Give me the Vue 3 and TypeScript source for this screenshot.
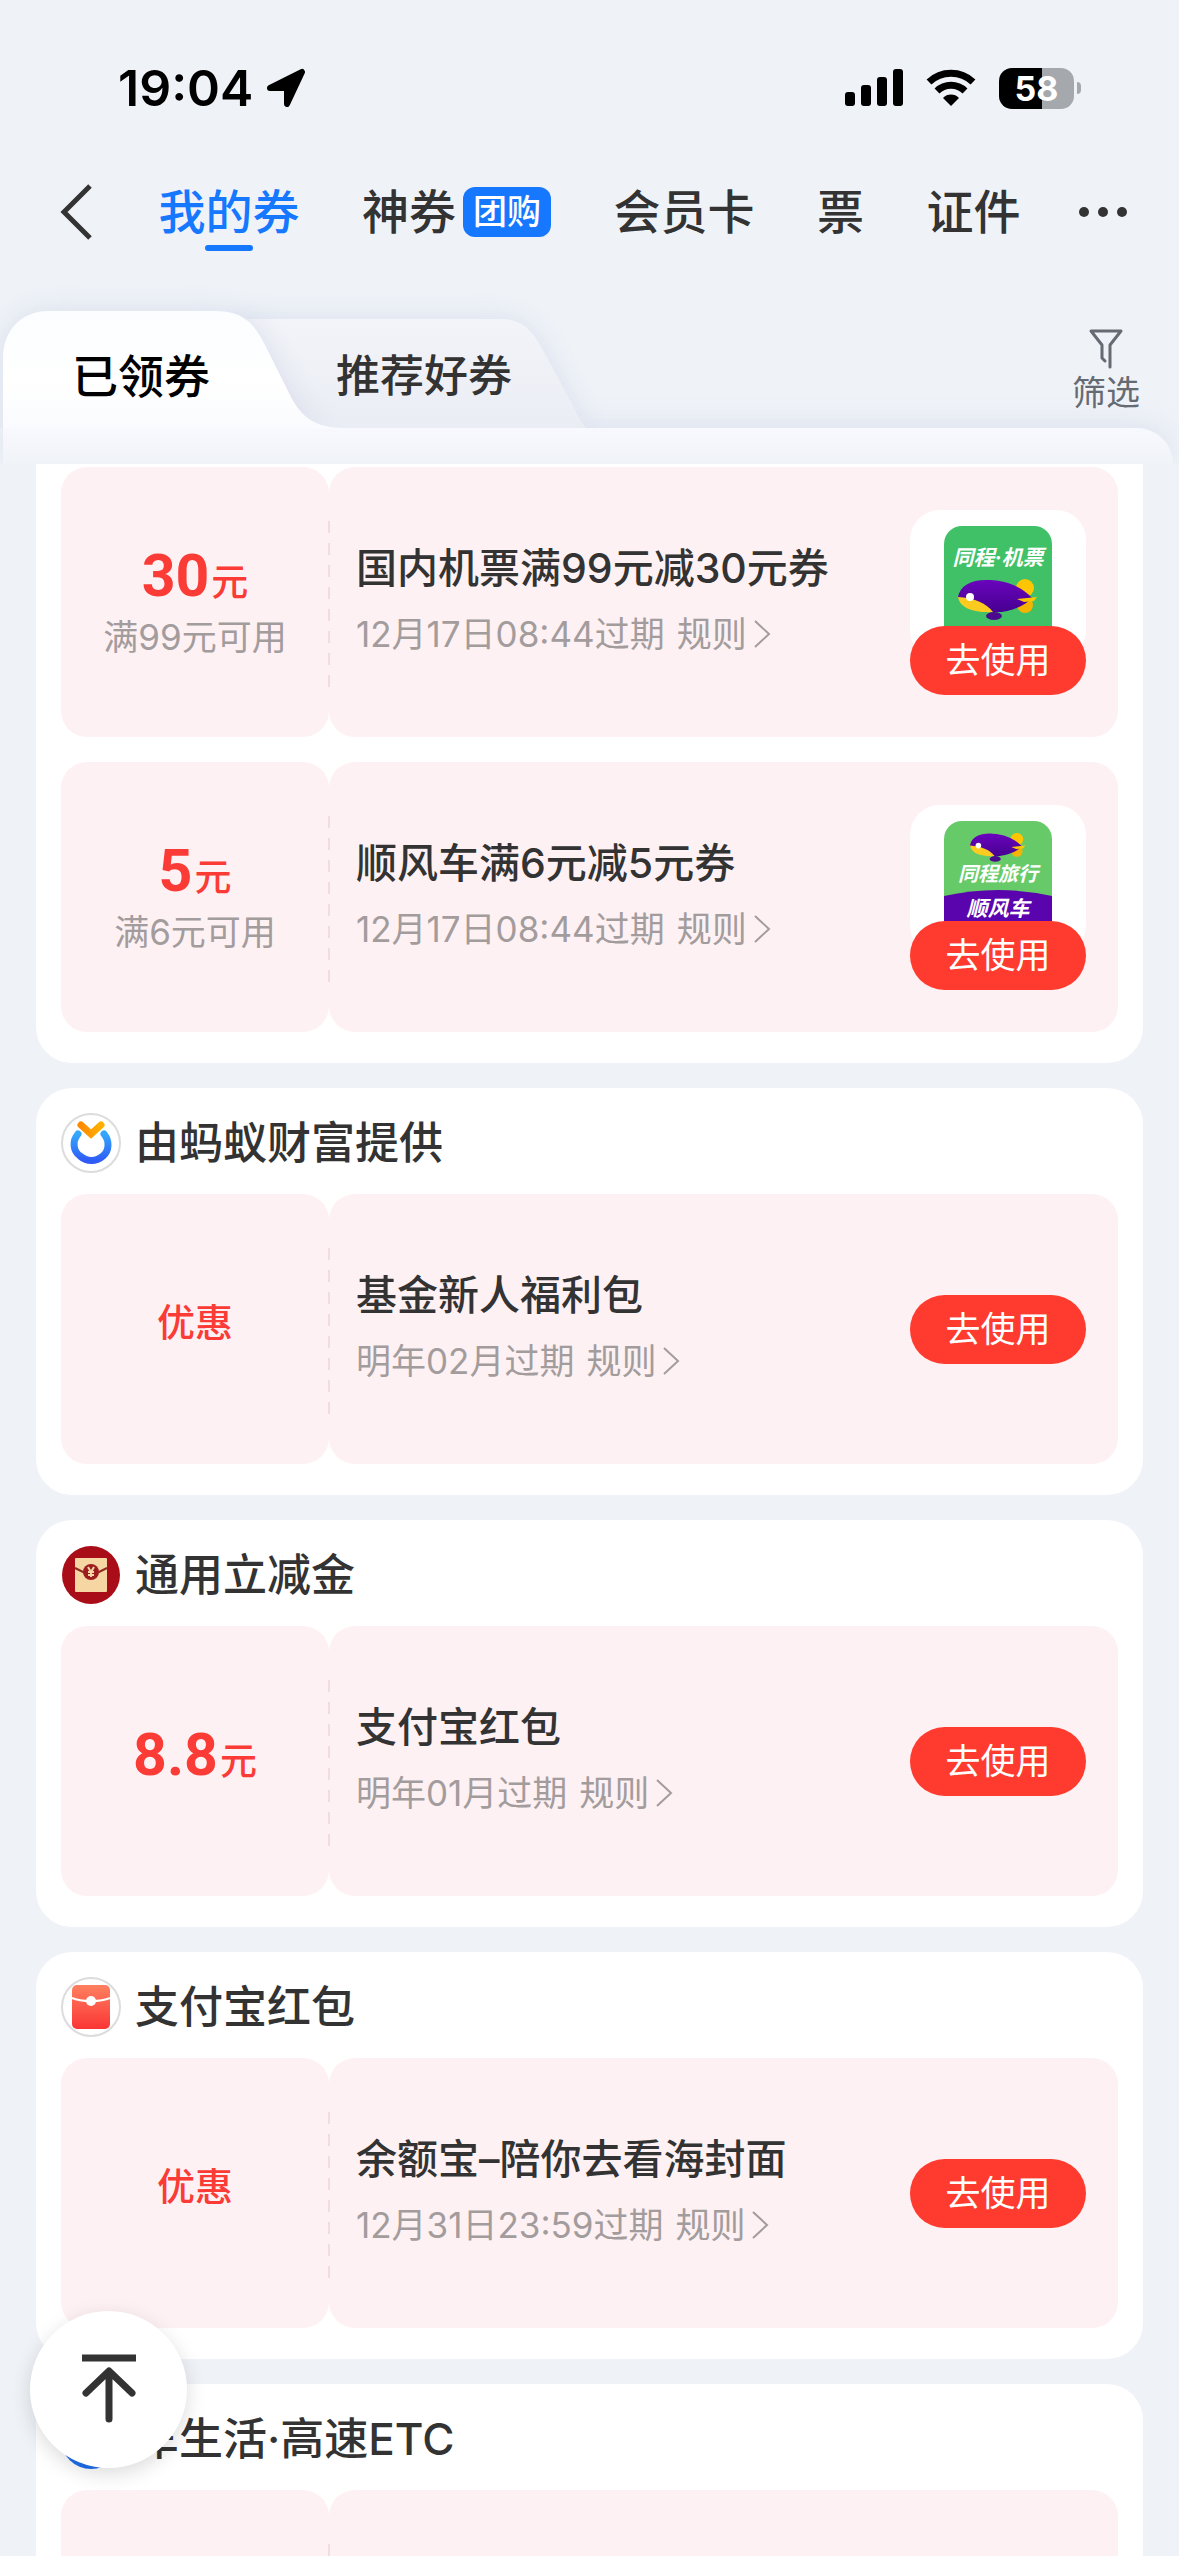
<script setup lang="ts">
import { ref } from 'vue'

type Thumb = 'flight' | 'ride'
type Icon = 'fortune' | 'discount' | 'redpacket' | 'car'

interface Coupon {
  id: number
  amount?: string
  label?: string
  condition?: string
  title: string
  expiry: string
  thumb?: Thumb
}

interface Group {
  id: number
  icon?: Icon
  name?: string
  coupons: Coupon[]
}

const navItems = [
  { id: 'mine', text: '我的券' },
  { id: 'deal', text: '神券', badge: '团购' },
  { id: 'member', text: '会员卡' },
  { id: 'ticket', text: '票' },
  { id: 'id', text: '证件' },
]
const activeNav = ref('mine')
const activeTab = ref<'owned' | 'recommended'>('owned')
const list = ref<HTMLElement | null>(null)

const groups: Group[] = [
  {
    id: 1,
    coupons: [
      { id: 11, amount: '30', condition: '满99元可用', title: '国内机票满99元减30元券', expiry: '12月17日08:44过期', thumb: 'flight' },
      { id: 12, amount: '5', condition: '满6元可用', title: '顺风车满6元减5元券', expiry: '12月17日08:44过期', thumb: 'ride' },
    ],
  },
  { id: 2, icon: 'fortune', name: '由蚂蚁财富提供', coupons: [{ id: 21, label: '优惠', title: '基金新人福利包', expiry: '明年02月过期' }] },
  { id: 3, icon: 'discount', name: '通用立减金', coupons: [{ id: 31, amount: '8.8', title: '支付宝红包', expiry: '明年01月过期' }] },
  { id: 4, icon: 'redpacket', name: '支付宝红包', coupons: [{ id: 41, label: '优惠', title: '余额宝–陪你去看海封面', expiry: '12月31日23:59过期' }] },
  { id: 5, icon: 'car', name: '车生活·高速ETC', coupons: [{ id: 51, label: '', title: '', expiry: '' }] },
]

function scrollToTop() {
  list.value?.scrollTo({ top: 0, behavior: 'smooth' })
}
</script>

<template>
  <div class="page">
    <div class="status">
      <div class="status-left">
        <span class="time">19:04</span>
        <svg width="40" height="40" viewBox="0 0 40 40" aria-hidden="true">
          <path d="M36 4 L21 36 V20 H4 Z" fill="#000" stroke="#000" stroke-width="6" stroke-linejoin="round" />
        </svg>
      </div>
      <div class="status-right">
        <svg width="58" height="38" viewBox="0 0 58 38" aria-hidden="true">
          <rect x="0" y="23" width="10" height="14" rx="3" />
          <rect x="16" y="16" width="10" height="21" rx="3" />
          <rect x="32" y="8" width="10" height="29" rx="3" />
          <rect x="48" y="0" width="10" height="37" rx="3" />
        </svg>
        <svg width="52" height="38" viewBox="0 0 52 38" aria-hidden="true">
          <path d="M4 13 A32 32 0 0 1 48 13" fill="none" stroke="#000" stroke-width="7" />
          <path d="M12 22 A20 20 0 0 1 40 22" fill="none" stroke="#000" stroke-width="7" />
          <path d="M18 29 A11 11 0 0 1 34 29 L26 37 Z" />
        </svg>
        <div class="battery">
          <div class="battery-body">58</div>
          <div class="battery-tip"></div>
        </div>
      </div>
    </div>

    <nav class="nav">
      <button class="back" aria-label="返回">
        <svg width="32" height="56" viewBox="0 0 32 56" aria-hidden="true">
          <path d="M30 2 L4 28 L30 54" fill="none" stroke="#333" stroke-width="5" />
        </svg>
      </button>
      <button
        v-for="item in navItems"
        :key="item.id"
        class="nav-item"
        :class="{ active: activeNav === item.id }"
        @click="activeNav = item.id"
      >
        <span>{{ item.text }}</span>
        <span v-if="item.badge" class="badge">{{ item.badge }}</span>
      </button>
      <button class="more" aria-label="更多">
        <svg width="48" height="12" viewBox="0 0 48 12" fill="#333" aria-hidden="true">
          <circle cx="5" cy="6" r="5" />
          <circle cx="24" cy="6" r="5" />
          <circle cx="43" cy="6" r="5" />
        </svg>
      </button>
    </nav>

    <div class="tabs">
      <svg class="tabs-shape" width="600" height="118" viewBox="0 0 600 118" aria-hidden="true">
        <defs>
          <linearGradient id="tabOn" x1="0" y1="0" x2="0" y2="1">
            <stop offset="0" stop-color="#fbfdff" />
            <stop offset="0.6" stop-color="#ffffff" />
            <stop offset="1" stop-color="#fafbfe" />
          </linearGradient>
          <linearGradient id="tabOff" x1="0" y1="0" x2="0" y2="1">
            <stop offset="0" stop-color="#f3f4f9" />
            <stop offset="1" stop-color="#eaedf4" />
          </linearGradient>
        </defs>
        <path class="shape" d="M240 9 H500 C524 9 533 22 543 40 L570 90 C576 101 579 110 586 118 H240 Z" fill="url(#tabOff)" />
        <path class="shape" d="M3 118 V48 C3 20 22 1 48 1 H214 C244 1 254 14 264 33 L291 87 C301 106 314 118 344 118 Z" fill="url(#tabOn)" />
      </svg>
      <button class="tab" :class="{ on: activeTab === 'owned' }" @click="activeTab = 'owned'">已领券</button>
      <button class="tab second" :class="{ on: activeTab === 'recommended' }" @click="activeTab = 'recommended'">推荐好券</button>
      <button class="filter">
        <svg width="36" height="40" viewBox="0 0 36 40" fill="none" stroke="#666b73" stroke-width="3" stroke-linejoin="round" stroke-linecap="round" aria-hidden="true">
          <path d="M22 38 V16 L33 2 H3 L14 16 V29 L17 32" />
        </svg>
        <span>筛选</span>
      </button>
    </div>
    <div class="panel-top"></div>

    <main ref="list" class="list">
      <section v-for="group in groups" :key="group.id" class="card" :class="{ cut: !group.name }">
        <header v-if="group.name" class="card-head">
          <svg v-if="group.icon === 'fortune'" class="logo" viewBox="0 0 60 60" aria-hidden="true">
            <defs>
              <linearGradient id="ring" x1="0" y1="0" x2="0" y2="1">
                <stop offset="0" stop-color="#35a8fb" />
                <stop offset="1" stop-color="#2f5cf6" />
              </linearGradient>
              <linearGradient id="vee" x1="0" y1="0" x2="1" y2="0">
                <stop offset="0" stop-color="#ff8a00" />
                <stop offset="1" stop-color="#ffb000" />
              </linearGradient>
            </defs>
            <circle cx="30" cy="30" r="29" fill="#fff" stroke="#dcdcdc" stroke-width="2" />
            <path d="M17 21 C11 28 12 38 19 43 C26 49 35 49 42 43 C48 38 49 28 43 21" fill="none" stroke="url(#ring)" stroke-width="7" stroke-linecap="round" />
            <path d="M20 12 L30 21 L40 12" fill="none" stroke="url(#vee)" stroke-width="7" stroke-linecap="round" />
          </svg>
          <svg v-else-if="group.icon === 'discount'" class="logo" viewBox="0 0 60 60" aria-hidden="true">
            <circle cx="30" cy="30" r="29" fill="#a90d18" />
            <rect x="14" y="13" width="32" height="34" rx="1" fill="#f6d6a2" />
            <path d="M14 23 L24 28 H36 L46 23" fill="none" stroke="#8d2b22" stroke-width="2" />
            <circle cx="30" cy="27" r="8" fill="#9d1d1f" />
            <path d="M27 22 L30 27 L33 22 M30 27 V32 M27 27 H33 M27 30 H33" fill="none" stroke="#f6d6a2" stroke-width="2" />
          </svg>
          <svg v-else-if="group.icon === 'redpacket'" class="logo" viewBox="0 0 60 60" aria-hidden="true">
            <defs>
              <linearGradient id="packet" x1="0" y1="0" x2="0" y2="1">
                <stop offset="0" stop-color="#ff8060" />
                <stop offset="1" stop-color="#fb3535" />
              </linearGradient>
            </defs>
            <circle cx="30" cy="30" r="29" fill="#fff" stroke="#dcdcdc" stroke-width="2" />
            <rect x="11" y="8" width="38" height="44" rx="5" fill="url(#packet)" />
            <path d="M11 21 C20 25 40 25 49 21" fill="none" stroke="#fff" stroke-width="2" />
            <circle cx="30" cy="24" r="5" fill="#fff" />
          </svg>
          <svg v-else class="logo" viewBox="0 0 60 60" aria-hidden="true">
            <circle cx="30" cy="30" r="30" fill="#1f6ff0" />
          </svg>
          <h2>{{ group.name }}</h2>
        </header>

        <div class="coupons">
          <article v-for="c in group.coupons" :key="c.id" class="coupon">
            <div class="stub">
              <p v-if="c.amount" class="price"><span class="num">{{ c.amount }}</span><span class="unit">元</span></p>
              <p v-else class="label">{{ c.label }}</p>
              <p v-if="c.condition" class="muted">{{ c.condition }}</p>
            </div>
            <div class="body">
              <div class="info">
                <h3>{{ c.title }}</h3>
                <p v-if="c.expiry" class="muted row">
                  <span>{{ c.expiry }}</span>
                  <a href="#rules" class="rules">规则
                    <svg width="18" height="28" viewBox="0 0 18 28" aria-hidden="true">
                      <path d="M2 1 L16 14 L2 27" fill="none" stroke="#a39c9d" stroke-width="2" />
                    </svg>
                  </a>
                </p>
              </div>
              <div class="action">
                <div v-if="c.thumb" class="thumb">
                  <svg width="108" height="110" viewBox="0 0 108 110" role="img" :aria-label="c.title">
                    <defs>
                      <linearGradient id="hull" x1="0" y1="0" x2="0" y2="1">
                        <stop offset="0" stop-color="#6a04bd" />
                        <stop offset="1" stop-color="#460090" />
                      </linearGradient>
                      <g id="blimp">
                        <circle cx="67" cy="9" r="9" fill="#fdc600" />
                        <circle cx="67" cy="26" r="8" fill="#f5b400" />
                        <ellipse cx="36" cy="37" rx="8" ry="4" fill="#4b0a8c" />
                        <path d="M0 18 C2 6 14 0 32 1 C52 2 66 10 74 19 C66 28 48 34 36 33 C18 32 4 28 0 18 Z" fill="url(#hull)" />
                        <path d="M0 18 C16 19 28 24 35 33 C18 34 2 30 0 18 Z" fill="#fccb20" />
                        <path d="M59 20 L79 18 L76 22 L66 23 Z" fill="#fdc600" />
                        <circle cx="12" cy="18" r="4" fill="#fff" />
                      </g>
                    </defs>
                    <template v-if="c.thumb === 'flight'">
                      <rect width="108" height="130" rx="18" fill="#40c167" />
                      <text x="54" y="39" class="thumb-text">同程·机票</text>
                      <use href="#blimp" x="14" y="53" />
                    </template>
                    <template v-else>
                      <rect width="108" height="130" rx="18" fill="#67ca69" />
                      <path d="M0 75 Q54 63 108 75 V110 H0 Z" fill="#5a04ae" />
                      <g transform="translate(26 12) scale(0.7)"><use href="#blimp" /></g>
                      <text x="54" y="60" class="thumb-text small">同程旅行</text>
                      <text x="54" y="95" class="thumb-text">顺风车</text>
                    </template>
                  </svg>
                </div>
                <button v-if="c.title" class="use">去使用</button>
              </div>
            </div>
          </article>
        </div>
      </section>
    </main>

    <button class="to-top" aria-label="回到顶部" @click="scrollToTop">
      <svg width="56" height="72" viewBox="0 0 56 72" fill="none" stroke="#333" stroke-width="7" aria-hidden="true">
        <path d="M1 4 H55" />
        <path d="M5 39 L28 17 L51 39 M28 18 V65" stroke-linecap="round" stroke-linejoin="round" />
      </svg>
    </button>
  </div>
</template>

<style>
body {
  background: #eff3f8;
}
</style>

<style scoped>
.page {
  display: flex;
  flex-direction: column;
  height: 100vh;
  overflow: hidden;
  background: #eff3f8;
  color: #333;
  font-family: Inter, "Noto Sans CJK SC", sans-serif;
}
button {
  padding: 0;
  border: 0;
  background: none;
  color: inherit;
  font: inherit;
  cursor: pointer;
}
h2,
h3,
p {
  margin: 0;
}
svg {
  display: block;
  flex: none;
}

.status {
  display: flex;
  flex: none;
  align-items: center;
  justify-content: space-between;
  height: 176px;
  padding: 0 98px 0 118px;
  color: #000;
}
.status-left {
  display: flex;
  align-items: center;
  gap: 13px;
}
.time {
  font-size: 50px;
  font-weight: 600;
  line-height: 60px;
}
.status-right {
  display: flex;
  align-items: center;
  gap: 22px;
}
.battery {
  display: flex;
  align-items: center;
  gap: 3px;
}
.battery-body {
  width: 75px;
  border-radius: 13px;
  background: linear-gradient(90deg, #000 58%, #a5a8ad 58%);
  color: #fff;
  font-size: 34px;
  font-weight: 700;
  line-height: 41px;
  text-align: center;
}
.battery-tip {
  width: 4px;
  height: 12px;
  border-radius: 0 6px 6px 0;
  background: #a5a8ad;
}

.nav {
  display: flex;
  flex: none;
  align-items: center;
  justify-content: space-between;
  height: 72px;
  margin-bottom: 62px;
  padding: 0 52px 0 60px;
}
.back {
  margin-right: 4px;
}
.more {
  margin-left: -4px;
}
.nav-item {
  position: relative;
  display: flex;
  align-items: center;
  gap: 7px;
  font-size: 47px;
  font-weight: 500;
  line-height: 72px;
  white-space: nowrap;
}
.nav-item.active {
  color: #1677ff;
}
.nav-item.active::after {
  content: "";
  position: absolute;
  bottom: -3px;
  left: 50%;
  width: 48px;
  height: 6px;
  margin-left: -24px;
  border-radius: 3px;
  background: #1677ff;
}
.badge {
  padding: 0 10px;
  border-radius: 12px;
  background: #1677ff;
  color: #fff;
  font-size: 34px;
  line-height: 50px;
}

.tabs {
  position: relative;
  display: flex;
  flex: none;
  align-items: center;
  height: 118px;
  padding: 0 39px 0 72px;
}
.tabs-shape {
  position: absolute;
  bottom: 0;
  left: 0;
  overflow: visible;
  clip-path: inset(-60px -60px 0 -60px);
}
.shape {
  filter: drop-shadow(0 0 14px rgba(176, 184, 214, 0.35));
}
.tab {
  position: relative;
  padding-top: 14px;
  font-size: 44px;
  font-weight: 500;
  line-height: 60px;
}
.tab.on {
  color: #000;
  font-size: 46px;
}
.tab.second {
  margin-left: 126px;
}
.filter {
  display: flex;
  flex-direction: column;
  align-items: center;
  margin-left: auto;
  padding-top: 8px;
  color: #666b73;
  font-size: 34px;
  line-height: 48px;
}
.panel-top {
  flex: none;
  height: 36px;
  margin: 0 6px 0 3px;
  border-radius: 0 36px 0 0;
  background: linear-gradient(#f8f9fe, #f0f3f8);
  box-shadow: 0 -4px 26px rgba(176, 184, 214, 0.28);
}

.list {
  position: relative;
  display: flex;
  flex: 1;
  flex-direction: column;
  gap: 25px;
  min-height: 0;
  overflow: hidden;
  padding: 0 36px;
  background: #eff3f8;
}
.card {
  flex: none;
  padding: 25px 25px 31px;
  border-radius: 36px;
  background: #fff;
}
.card.cut {
  padding-top: 3px;
  border-radius: 0 0 36px 36px;
}
.card-head {
  display: flex;
  align-items: center;
  gap: 14px;
  margin-bottom: 21px;
}
.logo {
  width: 60px;
  height: 60px;
}
h2 {
  font-size: 44px;
  font-weight: 500;
  line-height: 60px;
}
.coupons {
  display: flex;
  flex-direction: column;
  gap: 25px;
}
.coupon {
  display: flex;
  height: 270px;
}
.stub,
.body {
  border-radius: 26px;
  background: #fef1f3;
}
.stub {
  position: relative;
  display: flex;
  flex: none;
  flex-direction: column;
  align-items: center;
  justify-content: center;
  width: 268px;
}
.stub::after {
  content: "";
  position: absolute;
  top: 54px;
  right: -1px;
  bottom: 46px;
  width: 2px;
  background: repeating-linear-gradient(#f3dcdf 0 12px, transparent 12px 22px);
}
.price {
  display: flex;
  align-items: baseline;
  gap: 2px;
  padding-top: 6px;
  color: #fb3b36;
  line-height: 56px;
}
.price:only-child {
  padding: 0 0 6px;
}
.num {
  font-family: Roboto, sans-serif;
  font-size: 59px;
  font-weight: 700;
}
.unit {
  font-size: 37px;
  font-weight: 500;
}
.label {
  padding-bottom: 14px;
  color: #fb3b36;
  font-size: 38px;
  font-weight: 500;
  line-height: 52px;
}
.muted {
  color: #a39c9d;
  font-size: 35px;
  line-height: 52px;
  white-space: nowrap;
}
.body {
  display: flex;
  flex: 1;
  align-items: center;
  justify-content: space-between;
  padding: 0 32px 0 27px;
}
.info {
  display: flex;
  flex-direction: column;
  gap: 10px;
  padding-bottom: 6px;
}
h3 {
  font-size: 41px;
  font-weight: 500;
  line-height: 60px;
  white-space: nowrap;
}
.row {
  display: flex;
  gap: 12px;
}
.rules {
  display: flex;
  align-items: center;
  gap: 6px;
  color: inherit;
  text-decoration: none;
}
.action {
  flex: none;
  width: 176px;
}
.thumb {
  display: flex;
  justify-content: center;
  height: 150px;
  margin-bottom: -34px;
  padding-top: 16px;
  box-sizing: border-box;
  border-radius: 30px;
  background: #fff;
}
.thumb-text {
  fill: #fff;
  font-size: 21px;
  font-style: italic;
  font-weight: 700;
  text-anchor: middle;
}
.thumb-text.small {
  font-size: 20px;
}
.use {
  position: relative;
  width: 100%;
  border-radius: 35px;
  background: #ff3b30;
  color: #fff;
  font-size: 35px;
  line-height: 69px;
}

.to-top {
  position: fixed;
  bottom: 88px;
  left: 30px;
  display: flex;
  align-items: center;
  justify-content: center;
  width: 157px;
  height: 157px;
  border-radius: 50%;
  background: #fff;
  box-shadow: 0 6px 20px rgba(0, 0, 0, 0.14);
}
</style>
